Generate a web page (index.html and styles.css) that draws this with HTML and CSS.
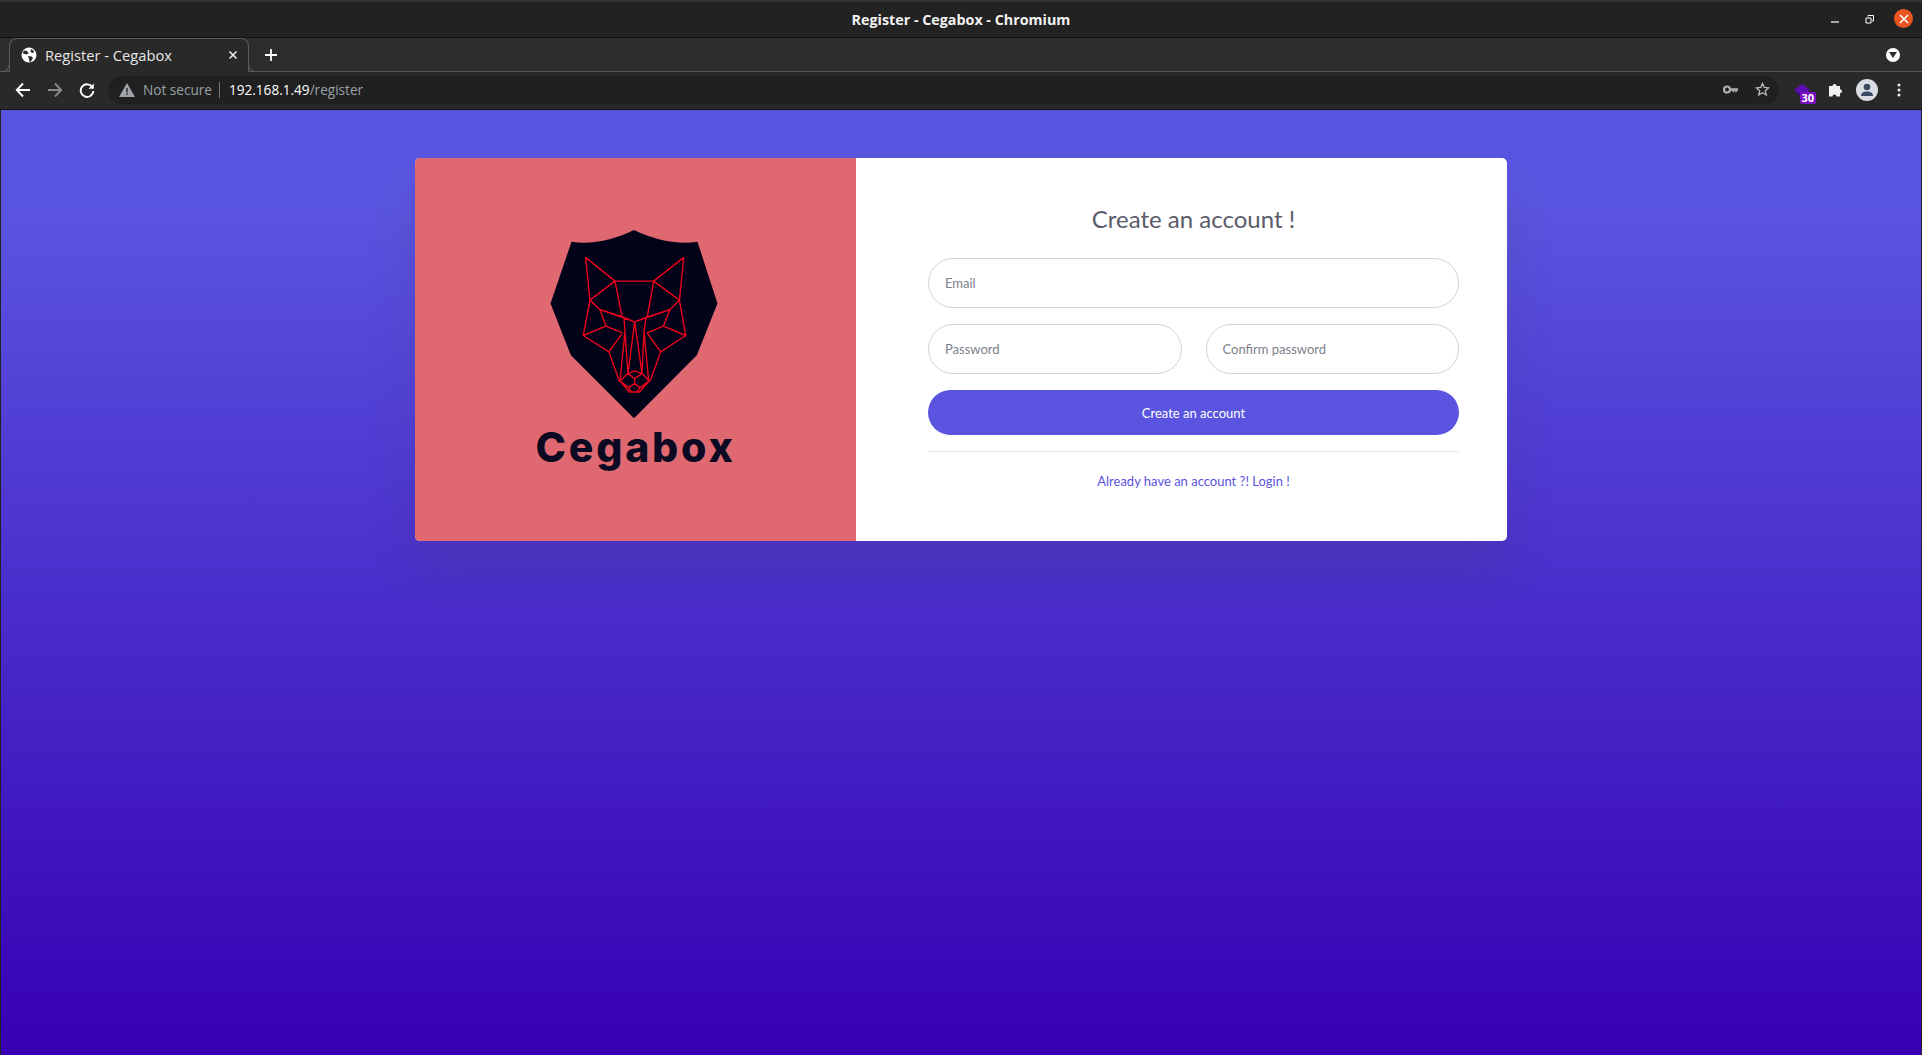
FILE: index.html
```html
<!DOCTYPE html>
<html lang="en">
<head>
<meta charset="utf-8">
<title>Register - Cegabox</title>
<link rel="stylesheet" href="styles.css">
</head>
<body>
<div class="window">
  <header class="titlebar">
    <div class="title">Register - Cegabox - Chromium</div>
    <div class="winbtns">
      <svg class="wb wbmin" width="14" height="14" viewBox="0 0 14 14"><path d="M0 10h8" stroke="#fff" stroke-width="1.2"/></svg>
      <svg class="wb" width="14" height="14" viewBox="0 0 14 14"><path d="M2 6h5v5H2z M4 4.500V3.500h5.500V9H8" fill="none" stroke="#fff" stroke-width="1"/></svg>
      <span class="closebtn"><svg width="18" height="18" viewBox="0 0 18 18"><path d="M5 5l8 8M13 5l-8 8" stroke="#fff" stroke-width="1.600"/></svg></span>
    </div>
  </header>
  <div class="tabstrip">
    <div class="tab">
      <svg class="favicon" width="16" height="16" viewBox="0 0 16 16"><circle cx="8" cy="8" r="7.500" fill="#fff"/><path d="M3 3.500l3 .5 1.500 2-1.500 1.500L3.500 7 1.500 6zM10 2l2.500 1.500.5 2-2 .5-1.500-1.500zM7 9l3.500.5 1.500 1.500-2 3.500-1.500.5L8 12z" fill="#2b2b2b"/></svg>
      <span class="tabtitle">Register - Cegabox</span>
      <svg class="tabclose" width="10" height="10" viewBox="0 0 10 10"><path d="M1.500 1.500l7 7M8.500 1.500l-7 7" stroke="#eee" stroke-width="1.500"/></svg>
    </div>
    <svg class="newtab" width="12" height="12" viewBox="0 0 12 12"><path d="M6 0v12M0 6h12" stroke="#fff" stroke-width="1.800"/></svg>
    <span class="tabmenu"><svg width="8" height="6" viewBox="0 0 8 6"><path d="M0 0h8L4 6z" fill="#2b2b2b"/></svg></span>
  </div>
  <div class="toolbar">
    <svg class="navicon" width="16" height="16" viewBox="0 0 16 16"><path d="M15 8H2M8 1.500L1.800 8 8 14.500" fill="none" stroke="#fff" stroke-width="1.900"/></svg>
    <svg class="navicon dim" width="16" height="16" viewBox="0 0 16 16"><path d="M1 8h13M8 1.500L14.200 8 8 14.500" fill="none" stroke="#8a8a8a" stroke-width="1.900"/></svg>
    <svg class="navicon" width="16" height="16" viewBox="0 0 16 16"><path d="M13.500 5.500A6.300 6.300 0 1 0 14.300 9" fill="none" stroke="#fff" stroke-width="1.900"/><path d="M14.800 1.500v5.300H9.500z" fill="#fff"/></svg>
    <div class="omnibox">
      <svg class="warn" width="16" height="14" viewBox="0 0 16 14"><path d="M8 0l8 14H0z" fill="#a0a4a8"/><path d="M7.300 5h1.400v4.500H7.300zM7.300 10.500h1.400V12H7.300z" fill="#292929"/></svg>
      <span class="notsecure">Not secure</span>
      <span class="sep"></span>
      <span class="url">192.168.1.49<span class="urlpath">/register</span></span>
      <svg class="key" width="15" height="9" viewBox="0 0 15 9"><circle cx="4" cy="4.500" r="3" fill="none" stroke="#b0b0b0" stroke-width="2.200"/><path d="M6.500 3.200h8.500v2.600h-1.200v1.500h-1.600V5.800h-1v1.500h-1.600V5.800H6.500z" fill="#b0b0b0"/></svg>
      <svg class="star" width="15" height="15" viewBox="0 0 15 15"><path d="M7.500 1.500l1.800 4 4.300.4-3.300 2.900 1 4.200-3.800-2.200-3.800 2.200 1-4.200L1.400 5.900l4.300-.4z" fill="none" stroke="#bdbdbd" stroke-width="1.300"/></svg>
    </div>
    <div class="exticon">
      <svg width="16" height="15" viewBox="0 0 16 15"><path d="M8 0l8 6-8 6-8-6z" fill="#5b0fb5"/><path d="M1 8l7 6 3-2z" fill="#3b0a7a"/></svg>
      <span class="badge">30</span>
    </div>
    <svg class="puzzle" width="16" height="16" viewBox="0 0 16 16"><path d="M1 5h3.500a2 2 0 1 1 4 0H12v3.200a2 2 0 1 1 0 4V15.500H8.500a2 2 0 1 0-4 0H1z" transform="translate(0 -1)" fill="#f1f1f1"/></svg>
    <span class="avatar"><svg width="22" height="22" viewBox="0 0 22 22"><circle cx="11" cy="11" r="11" fill="#dadce4"/><circle cx="11" cy="8" r="3.300" fill="#3d4a63"/><path d="M5 17c0-3.500 3-4.500 6-4.500s6 1 6 4.500z" fill="#3d4a63"/></svg></span>
    <svg class="dots" width="4" height="14" viewBox="0 0 4 14"><circle cx="2" cy="2" r="1.500" fill="#eee"/><circle cx="2" cy="7" r="1.500" fill="#eee"/><circle cx="2" cy="12" r="1.500" fill="#eee"/></svg>
  </div>
  <main class="page">
    <section class="card">
      <div class="brand">
        <svg class="wolf" width="168" height="189" viewBox="152 60 500 566">
          <path class="shield" d="M402 60C345 88 275 105 215 95L152 280 213 435 402 624 590 435 652 280 592 95C530 105 460 88 402 60Z"/>
          <path class="lines" d="M257 142L345 213 270 270 257 142M551 142L461 213 538 270 551 142M345 213H461M345 213L366 318M461 213L442 318M270 270L300 298 404 335 510 298 538 270M270 270L250 376 318 348 300 298M538 270L557 376 490 348 510 298M318 348L368 368M490 348L441 368M250 376L327 425 365 372M557 376L482 425 441 368M327 425L358 513M482 425L450 513M300 298L372 322 375 365 360 513M510 298L438 322 432 365 446 513M372 322L404 335 438 322M404 335L384 490M404 335L426 490M375 365L384 490M432 365L426 490M384 490L404 482 426 490 448 512 420 532 404 520 386 532 360 512 384 490M360 512L388 545H418L448 512M386 532L394 545M420 532L412 545M404 520V505L384 490M404 505L426 490"/>
        </svg>
        <div class="logotext">Cegabox</div>
      </div>
      <div class="formside">
        <h1 class="heading">Create an account !</h1>
        <form class="form">
          <input class="field" type="email" placeholder="Email">
          <div class="pair">
            <input class="field" type="password" placeholder="Password">
            <input class="field" type="password" placeholder="Confirm password">
          </div>
          <button class="submit" type="button">Create an account</button>
        </form>
        <hr class="rule">
        <a class="login" href="#">Already have an account ?! Login !</a>
      </div>
    </section>
  </main>
</div>
</body>
</html>
```

FILE: styles.css
```css
* { box-sizing: border-box; }
html, body { margin: 0; height: 100%; }
body { overflow: hidden; background: #222; }

.window {
  height: 1055px;
  display: flex;
  flex-direction: column;
  font-family: "Noto Sans", sans-serif;
}

.titlebar {
  height: 38px;
  flex: none;
  background: #222;
  border-top: 2px solid #333;
  border-bottom: 1px solid #111;
  display: flex;
  align-items: center;
  justify-content: center;
  position: relative;
}
.title { color: #f2f2f2; font-size: 14.300px; font-weight: 700; font-family: "Open Sans", sans-serif; }
.winbtns {
  position: absolute;
  right: 9px;
  top: 7px;
  display: flex;
  align-items: center;
  gap: 16px;
}
.wbmin { margin-right: 3px; }
.closebtn {
  width: 19px; height: 19px;
  border-radius: 50%;
  background: #e95420;
  display: flex;
  align-items: center;
  justify-content: center;
}

.tabstrip {
  height: 34px;
  flex: none;
  background: #2d2d2d;
  border-bottom: 1px solid #5a5a5a;
  padding-left: 9px;
  display: flex;
  align-items: center;
}
.tab {
  width: 240px;
  height: 34px;
  margin-top: 1px;
  background: #292929;
  border: 1px solid #5a5a5a;
  border-bottom: none;
  border-radius: 8px 8px 0 0;
  display: flex;
  align-items: center;
  padding: 0 10px 1px 11px;
  position: relative;
}
.tab::before, .tab::after {
  content: "";
  position: absolute;
  bottom: 0;
  width: 8px;
  height: 8px;
  border-bottom: 1px solid #5a5a5a;
}
.tab::before { left: -9px; border-right: 1px solid #5a5a5a; border-bottom-right-radius: 8px; }
.tab::after { right: -9px; border-left: 1px solid #5a5a5a; border-bottom-left-radius: 8px; }
.favicon { flex: none; }
.tabtitle {
  margin-left: 8px;
  color: #e6e6e6;
  font-size: 14.700px;
  flex: 1;
  font-family: "Open Sans", sans-serif;
}
.newtab { margin-left: 16px; flex: none; }
.tabmenu {
  margin-left: auto;
  margin-right: 22px;
  width: 14px; height: 14px;
  border-radius: 50%;
  background: #fff;
  display: flex;
  align-items: center;
  justify-content: center;
}

.toolbar {
  height: 38px;
  flex: none;
  background: #292929;
  border-bottom: 1px solid #111;
  display: flex;
  align-items: center;
  padding: 0 0 2px 15px;
}
.navicon { flex: none; margin-right: 17px; }
.navicon:nth-child(1) { margin-right: 16px; }
.navicon:nth-child(2) { margin-right: 16px; }
.omnibox {
  width: 1671px;
  height: 28px;
  margin-left: -4px;
  border-radius: 14px;
  background: #202020;
  display: flex;
  align-items: center;
  padding-left: 11px;
  font-family: "Open Sans", sans-serif;
  font-size: 13.600px;
}
.warn { flex: none; }
.notsecure { margin-left: 8px; color: #9aa0a6; }
.sep { width: 1px; height: 16px; background: #777; margin: 0 9px 0 7px; }
.url { color: #fff; }
.urlpath { color: #9aa0a6; }
.key { margin-left: auto; margin-right: 17px; flex: none; }
.star { margin-right: 9px; flex: none; }
.exticon { margin-left: 15px; position: relative; width: 16px; height: 16px; flex: none; }
.badge {
  position: absolute;
  left: 6px;
  top: 10px;
  background: #7a0fc4;
  color: #fff;
  font: 700 11px/12px "Open Sans", sans-serif;
  padding: 0 1.500px;
  border-radius: 2px;
}
.puzzle { margin-left: 18px; flex: none; }
.avatar { margin-left: 12px; width: 22px; height: 22px; flex: none; display: flex; }
.dots { margin-left: 19px; flex: none; }

.page {
  flex: 1;
  background: linear-gradient(180deg, #5a55e0 10%, #3700b3 100%);
  padding-top: 48px;
  display: flex;
  justify-content: center;
  align-items: flex-start;
  border-left: 1px solid #222;
  border-right: 1px solid #222;
}
.card {
  width: 1092px;
  height: 383px;
  display: flex;
  border-radius: 5px;
  overflow: hidden;
  background: #fff;
  box-shadow: 0 2rem 3rem rgba(58, 59, 69, .15);
}
.brand {
  width: 441px;
  flex: none;
  background: #e06971;
  display: flex;
  flex-direction: column;
  align-items: center;
  padding-top: 72px;
}
.wolf { display: block; margin-left: -4px; }
.shield { fill: #020219; }
.lines { fill: none; stroke: #ea001c; stroke-width: 4.200; stroke-linejoin: round; }
.logotext {
  margin-top: 3px;
  font: 800 41px/50px Inter, sans-serif;
  letter-spacing: 2.800px;
  color: #0b0a22;
}

.formside {
  flex: 1;
  padding: 44px 48px 0 72px;
  display: flex;
  flex-direction: column;
  font-family: Lato, sans-serif;
}
.heading {
  margin: 0;
  font-size: 24px;
  font-weight: 400;
  line-height: 34px;
  color: #5a5c69;
  text-align: center;
}
.form { margin-top: 22px; display: flex; flex-direction: column; gap: 16px; }
.field {
  width: 100%;
  height: 50px;
  border: 1px solid #d1d3e2;
  border-radius: 25px;
  padding: 0 16px;
  background: #fff;
  font: 13px Lato, sans-serif;
  color: #6e707e;
  outline: none;
}
.field::placeholder { color: #7d7f8c; opacity: 1; }
.pair { display: flex; gap: 24px; }
.submit {
  height: 45px;
  border: none;
  border-radius: 23px;
  background: #5a54e0;
  color: #fff;
  font: 13px Lato, sans-serif;
}
.rule { width: 100%; margin: 16px 0 0; border: none; border-top: 1px solid #e3e6f0; }
.login {
  margin-top: 20px;
  text-align: center;
  font-size: 13px;
  line-height: 18px;
  color: #5a54e0;
  text-decoration: none;
}
```
